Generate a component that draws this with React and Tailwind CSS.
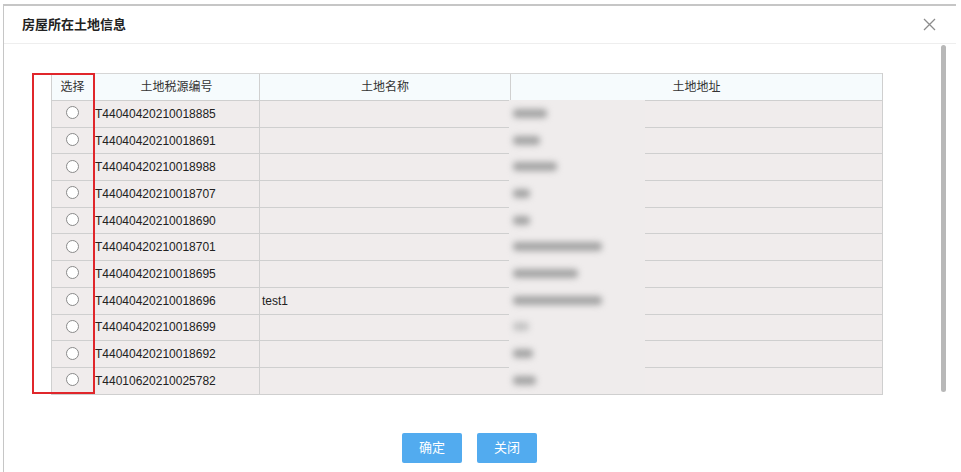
const rows = [
  { code: 'T44040420210018885', name: '', addr: 34 },
  { code: 'T44040420210018691', name: '', addr: 27 },
  { code: 'T44040420210018988', name: '', addr: 44 },
  { code: 'T44040420210018707', name: '', addr: 17 },
  { code: 'T44040420210018690', name: '', addr: 17 },
  { code: 'T44040420210018701', name: '', addr: 89 },
  { code: 'T44040420210018695', name: '', addr: 65 },
  { code: 'T44040420210018696', name: 'test1', addr: 89 },
  { code: 'T44040420210018699', name: '', addr: 16, light: true },
  { code: 'T44040420210018692', name: '', addr: 20 },
  { code: 'T44010620210025782', name: '', addr: 23 },
];

function Radio() {
  return <span className="block w-[13px] h-[13px] rounded-full border border-[#8a8a8a] bg-white" />;
}

export default function App() {
  return (
    <div className="w-[961px] h-[472px] bg-white overflow-hidden text-[#333] font-['Liberation_Sans','Noto_Sans_CJK_SC',sans-serif]">
      <div className="relative ml-[3px] mt-[4px] w-[953px] h-[468px] border-t-2 border-l border-[#c6c6c6]">
        {/* header */}
        <div className="flex items-center justify-between h-[38px] pl-[18px] pr-[20px] border-b border-[#eeeeee]">
          <span className="text-[13px] font-semibold text-[#222]">房屋所在土地信息</span>
          <svg width="13" height="13" viewBox="0 0 13 13" className="text-[#8c8c8c]">
            <path d="M1 1L12 12M12 1L1 12" stroke="currentColor" strokeWidth="1.3" />
          </svg>
        </div>

        {/* scrollbar */}
        <div className="absolute left-[937px] top-[39px] w-[5px] h-[347px] rounded-full bg-[#b8b8b8]" />

        {/* body */}
        <div className="relative pl-[47px] pt-[29px]">
          <div className="w-[832px] border-r border-b border-[#cfcfcf] text-[12px]">
            <div className="flex h-[27px] bg-[#f6fbfd] border-t border-[#d6d6d6]">
              <div className="w-[42px] flex items-center justify-center border-l border-[#d0d0d0]">选择</div>
              <div className="w-[166px] flex items-center justify-center border-l border-[#d0d0d0]">土地税源编号</div>
              <div className="w-[251px] flex items-center justify-center border-l border-[#d0d0d0]">土地名称</div>
              <div className="flex-1 flex items-center justify-center border-l border-[#d0d0d0]">土地地址</div>
            </div>
            {rows.map((r, i) => (
              <div key={i} className="flex h-[26.7px] bg-[#f0ecec] border-t border-[#cfcfcf]">
                <div className="w-[42px] flex items-center justify-center border-l border-[#d0d0d0] pb-[2px]">
                  <Radio />
                </div>
                <div className="w-[166px] flex items-center pl-[1px] border-l border-[#d0d0d0] text-[#222]">{r.code}</div>
                <div className="w-[251px] flex items-center pl-[2px] border-l border-[#d0d0d0] text-[#222]">{r.name}</div>
                <div className="flex-1 border-l border-[#d0d0d0]" />
              </div>
            ))}
          </div>

          {/* blurred address patch */}
          <div className="absolute left-[505px] top-[56px] w-[136px] h-[294px] bg-[#efecec] flex flex-col">
            {rows.map((r, i) => (
              <div key={i} className="h-[26.7px] flex items-center pl-[4px]">
                <span
                  className={`block h-[9px] rounded-[4px] blur-[3px] ${r.light ? 'bg-[#c4c4c4]' : 'bg-[#a4a4a4]'}`}
                  style={{ width: r.addr }}
                />
              </div>
            ))}
          </div>

          {/* red highlight */}
          <div className="absolute left-[28px] top-[29px] w-[63px] h-[321px] border-2 border-[#e0262b]" />
        </div>

        {/* footer */}
        <div className="flex gap-[15px] pl-[398px] pt-[38px]">
          <button className="w-[60px] h-[30px] rounded-[2px] bg-[#52abef] text-white text-[13px]">确定</button>
          <button className="w-[60px] h-[30px] rounded-[2px] bg-[#52abef] text-white text-[13px]">关闭</button>
        </div>
      </div>
    </div>
  );
}
